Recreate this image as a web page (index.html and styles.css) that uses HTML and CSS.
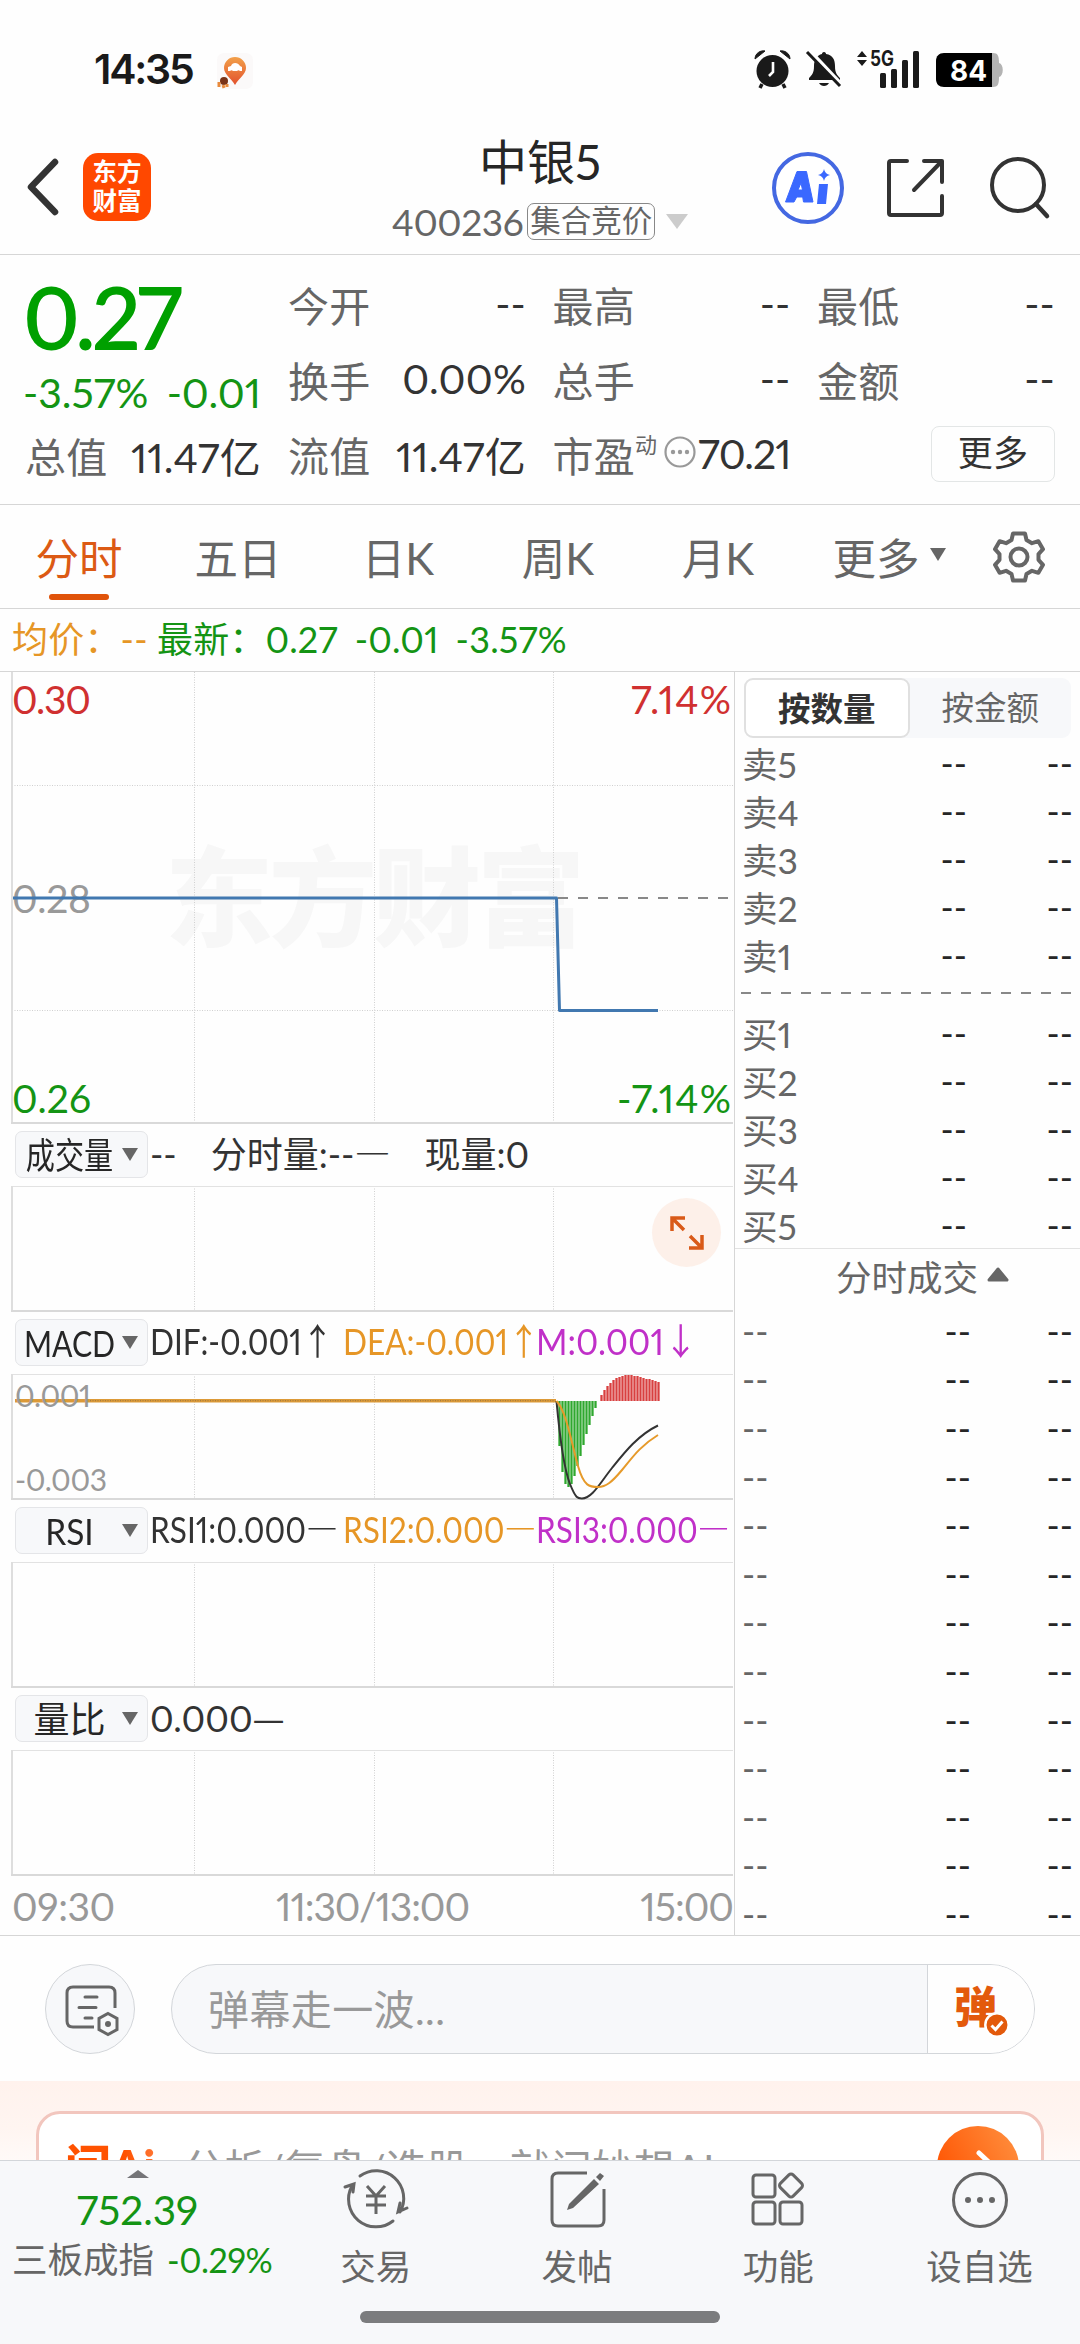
FILE: index.html
```html
<!DOCTYPE html>
<html lang="zh-CN">
<head>
<meta charset="utf-8">
<title>中银5 400236</title>
<link rel="stylesheet" href="styles.css">
</head>
<body>
<div class="phone">

  <div class="status">
    <span class="clock">14:35</span>
    <svg class="pin" width="36" height="36" viewBox="0 0 36 36">
      <defs><linearGradient id="pinFill" x1="0" y1="0" x2="0" y2="1"><stop offset="0" stop-color="#f2a04a"/><stop offset="1" stop-color="#e2512c"/></linearGradient></defs>
      <rect width="36" height="36" rx="7" fill="#fbf9f9"/>
      <path d="M18 32C14 25 7 21 7 15a11 11 0 0 1 22 0c0 6-7 10-11 17z" fill="url(#pinFill)"/>
      <path d="M11 18v-4l3-1c1-4 7-4 9 0l2 1v4h-2a2 2 0 0 0-3 0h-4a2 2 0 0 0-3 0z" fill="#fff"/>
      <circle cx="7" cy="28" r="4" fill="#7a3418"/><path d="M2 29v5M6 32l1 3M10 31v3" stroke="#e88a3c" stroke-width="3"/>
    </svg>
    <div class="status-right">
      <svg width="37" height="38" viewBox="0 0 37 38">
        <path d="M8 34l-2 4M29 34l2 4" stroke="#1a1a1a" stroke-width="3.5"/>
        <circle cx="18.5" cy="21" r="16" fill="#1a1a1a"/>
        <path d="M1 9C1 3 7 0 11 1zM36 9C36 3 30 0 26 1z" fill="#1a1a1a" stroke="#1a1a1a"/>
        <path d="M19 12v10l-4 4" fill="none" stroke="#fff" stroke-width="2.6"/>
      </svg>
      <svg class="bell" width="36" height="37" viewBox="0 0 36 37">
        <path d="M18 1c1.500 0 2 1 2 2 7 1 9 6 9 12 0 7 2 9 5 12v2H3v-2c3-3 5-5 5-12 0-6 3-11 8-12 0-1 .5-2 2-2z" fill="#1a1a1a"/>
        <path d="M13 32h10c-2 4-8 4-10 0z" fill="#1a1a1a"/>
        <path d="M4 0l32 34" stroke="#fff" stroke-width="4"/><path d="M1 1l33 34" stroke="#1a1a1a" stroke-width="3"/>
      </svg>
      <svg class="signal" width="64" height="38" viewBox="0 0 64 38">
        <path d="M1 7l5-6 5 6zM1 10h10l-5 6z" fill="#1a1a1a"/>
        <text x="14" y="16" class="fiveg" textLength="24" lengthAdjust="spacingAndGlyphs">5G</text>
        <rect x="24" y="23" width="6" height="15" rx="1.500"/><rect x="35" y="19" width="6" height="19" rx="1.500"/><rect x="46" y="10" width="6" height="28" rx="1.500"/><rect x="57" y="1" width="6" height="37" rx="1.500"/>
      </svg>
      <svg class="battery" width="67" height="36" viewBox="0 0 67 36">
        <path d="M54 1h3c5 0 6 3 6 10 5 1 5 13 0 14 0 7-1 10-6 10h-3z" fill="#b3b3b3"/>
        <path d="M8 1h48v34H8c-5 0-8-3-8-8V9c0-5 3-8 8-8z" fill="#000"/>
        <text x="14" y="29" class="pct" textLength="37" lengthAdjust="spacingAndGlyphs">84</text>
      </svg>
    </div>
  </div>

  <header class="header">
    <div class="head-left">
      <svg width="34" height="58" viewBox="0 0 34 58"><path d="M29 4L5 29l24 25" fill="none" stroke="#333" stroke-width="6.500" stroke-linecap="round" stroke-linejoin="round"/></svg>
      <div class="logo">东方<br>财富</div>
    </div>
    <div class="head-mid">
      <div class="title">中银5</div>
      <div class="sub"><span class="code">400236</span><span class="tag">集合竞价</span><svg width="22" height="15" viewBox="0 0 22 15"><path d="M0 0h22L11 15z" fill="#ccc"/></svg></div>
    </div>
    <div class="head-right">
      <svg width="72" height="72" viewBox="0 0 72 72">
        <circle cx="36" cy="36" r="34" fill="#fff" stroke="#4468e2" stroke-width="4"/>
        <path d="M25 19.500h9.500L41 50h-9.500l-.8-5h-6L22 50h-8.500zM29 31l-3 7h4.500z" fill="#3a68ff" stroke="#3a68ff" stroke-width="1" stroke-linejoin="round"/>
        <path d="M47 32h9l-2 20h-9z" fill="#3a68ff"/><path d="M52 17q1 5 6 6-5 1-6 6-1-5-6-6 5-1 6-6z" fill="#3a68ff"/>
      </svg>
      <svg class="share" width="60" height="60" viewBox="0 0 60 60"><path d="M21 3H5Q3 3 3 5v50q0 2 2 2h49q2 0 2-2V38M38 3h18v21M56 3L28 32" fill="none" stroke="#333" stroke-width="4" stroke-linecap="round" stroke-linejoin="round"/></svg>
      <svg class="search" width="60" height="62" viewBox="0 0 60 62"><circle cx="28" cy="28" r="26" fill="none" stroke="#333" stroke-width="4"/><path d="M46 47l11 12" stroke="#333" stroke-width="4.500" stroke-linecap="round"/></svg>
    </div>
  </header>

  <section class="quote">
    <div class="price">
      <div class="big">0.27</div>
      <div class="chg"><span>-3.57%</span><span>-0.01</span></div>
      <div class="kv"><span>总值</span><b>11.47亿</b></div>
    </div>
    <div class="cells">
      <div class="kv"><span>今开</span><b>--</b></div>
      <div class="kv"><span>最高</span><b>--</b></div>
      <div class="kv"><span>最低</span><b>--</b></div>
      <div class="kv"><span>换手</span><b>0.00%</b></div>
      <div class="kv"><span>总手</span><b>--</b></div>
      <div class="kv"><span>金额</span><b>--</b></div>
      <div class="kv"><span>流值</span><b>11.47亿</b></div>
      <div class="kv"><span>市盈<sup>动</sup></span>
        <svg width="32" height="32" viewBox="0 0 32 32"><circle cx="16" cy="16" r="14.500" fill="none" stroke="#999" stroke-width="2.200"/><g fill="#999"><circle cx="9" cy="16" r="2.200"/><circle cx="16" cy="16" r="2.200"/><circle cx="23" cy="16" r="2.200"/></g></svg>
        <b class="pe">70.21</b></div>
      <div class="kv end"><span class="more">更多</span></div>
    </div>
  </section>

  <nav class="tabs">
    <span class="tab on">分时</span><span class="tab">五日</span><span class="tab">日K</span><span class="tab">周K</span><span class="tab">月K</span>
    <span class="tab wide">更多<svg width="16" height="13" viewBox="0 0 16 13"><path d="M0 0h16L8 13z" fill="#666"/></svg></span>
    <svg class="gear" width="52" height="52" viewBox="0 0 52 52"><path d="M20 2.500h12l1.500 6.500 5.500 3.200 6.400-2 4.600 8-4.500 5v5.600l4.500 5-4.600 8-6.400-2-5.500 3.200L32 49.500H20L18.500 43 13 39.800l-6.400 2-4.600-8 4.500-5v-5.600l-4.500-5 4.600-8 6.400 2L18.500 9z" fill="none" stroke="#666" stroke-width="4" stroke-linejoin="round"/><circle cx="26" cy="26" r="8.500" fill="none" stroke="#666" stroke-width="4"/></svg>
  </nav>

  <div class="latest"><span class="avg">均价：<i>--</i></span><span class="now">最新：<i>0.27</i><i>-0.01</i><i>-3.57%</i></span></div>

  <main class="board">
    <div class="charts">
      <svg class="plot main-plot" width="734" height="452" viewBox="0 672 734 452">
        <text x="165" y="938" class="mark" textLength="420">东方财富</text>
        <g class="grid"><path d="M194.500 672v451M374.500 672v451M553.500 672v451M12 785.500h721M12 1010.500h721"/></g>
        <path class="frame-l" d="M12 672v451"/><path class="frame-b" d="M11 1123h722"/>
        <path class="dash" d="M558 898h175"/>
        <text x="12" y="913" class="axis grey" textLength="79">0.28</text>
        <path class="trend" d="M13 898h543.500l3 112.500H658"/>
        <text x="12" y="714" class="axis red" textLength="79">0.30</text>
        <text x="631" y="714" class="axis red" textLength="100">7.14%</text>
        <text x="12" y="1113" class="axis green" textLength="79">0.26</text>
        <text x="617" y="1113" class="axis green" textLength="114">-7.14%</text>
      </svg>

      <div class="ind"><span class="pick"><em class="narrow">成交量</em><svg width="16" height="13" viewBox="0 0 16 13"><path d="M0 0h16L8 13z" fill="#666"/></svg></span><span class="run"><i>--</i><i>分时量:--<u>—</u></i><i>现量:0</i></span></div>
      <div class="panel">
        <svg class="plot" width="734" height="126" viewBox="0 0 734 126"><g class="grid"><path d="M194.500 0v125M374.500 0v125M553.500 0v125"/></g><path class="frame-t" d="M11 .5h722"/><path class="frame-l" d="M12 0v125"/><path class="frame-b" d="M11 125h722"/></svg>
        <span class="expand"><svg width="34" height="34" viewBox="0 0 34 34"><path d="M2 15V2h13M2 2l12 12M32 19v13H19M32 32L20 20" fill="none" stroke="#d95a18" stroke-width="3.500"/></svg></span>
      </div>

      <div class="ind"><span class="pick"><em class="macd">MACD</em><svg width="16" height="13" viewBox="0 0 16 13"><path d="M0 0h16L8 13z" fill="#666"/></svg></span><span class="vals"><i>DIF:-0.001<u>↑</u></i><i class="gold">DEA:-0.001<u>↑</u></i><i class="pink m">M:0.001<u>↓</u></i></span></div>
      <svg class="plot" width="734" height="126" viewBox="0 1374 734 126">
        <g class="grid"><path d="M194.500 1374v125M374.500 1374v125M553.500 1374v125"/></g>
        <path class="frame-t" d="M11 1374.500h722"/><path class="frame-l" d="M12 1374v125"/><path class="frame-b" d="M11 1499h722"/>
        <path class="zero" d="M15 1400.700h541"/>
        <path class="dotted" d="M90 1400.700h464"/>
        <text x="15" y="1407" class="axis small grey" textLength="76">0.001</text>
        <text x="15" y="1491" class="axis small grey" textLength="92">-0.003</text>
        <g id="bars">
          <path class="dn" d="M559.500 1401v45M562.500 1401v71M565.500 1401v83M568.500 1401v86M571.500 1401v83M574.500 1401v75M577.500 1401v65M580.500 1401v55M583.500 1401v44M586.500 1401v33M589.500 1401v24M592.500 1401v15M595.500 1401v7"/>
          <path class="up" d="M601.500 1401v-6M604.500 1401v-11M607.500 1401v-15M610.500 1401v-18M613.500 1401v-21M616.500 1401v-23M619.500 1401v-24M622.500 1401v-25M625.500 1401v-26M628.500 1401v-26M631.500 1401v-26M634.500 1401v-25M637.500 1401v-25M640.500 1401v-24M643.500 1401v-23M646.500 1401v-22M649.500 1401v-22M652.500 1401v-21M655.500 1401v-20M658.500 1401v-19"/>
        </g>
        <path class="dif" d="M556.500 1401C560 1440 564 1469 570 1484S578 1498.500 582 1498.500C592 1498.500 600 1483 612 1468S638 1435 658 1425.500"/>
        <path class="dea" d="M556.500 1401C566 1410 572 1445 578 1466S590 1487 598 1487C606 1487 612 1482 622 1470S640 1446 658 1435"/>
      </svg>

      <div class="ind"><span class="pick"><em class="rsi">RSI</em><svg width="16" height="13" viewBox="0 0 16 13"><path d="M0 0h16L8 13z" fill="#666"/></svg></span><span class="vals"><i>RSI1:0.000<u>—</u></i><i class="gold">RSI2:0.000<u>—</u></i><i class="pink">RSI3:0.000<u>—</u></i></span></div>
      <svg class="plot" width="734" height="126" viewBox="0 0 734 126"><g class="grid"><path d="M194.500 0v125M374.500 0v125M553.500 0v125"/></g><path class="frame-t" d="M11 .5h722"/><path class="frame-l" d="M12 0v125"/><path class="frame-b" d="M11 125h722"/></svg>

      <div class="ind"><span class="pick"><em>量比</em><svg width="16" height="13" viewBox="0 0 16 13"><path d="M0 0h16L8 13z" fill="#666"/></svg></span><span class="run"><i>0.000<u>—</u></i></span></div>
      <svg class="plot" width="734" height="126" viewBox="0 0 734 126"><g class="grid"><path d="M194.500 0v125M374.500 0v125M553.500 0v125"/></g><path class="frame-t" d="M11 .5h722"/><path class="frame-l" d="M12 0v125"/><path class="frame-b" d="M11 125h722"/></svg>

      <div class="times"><span>09:30</span><span class="noon">11:30/13:00</span><span>15:00</span></div>
    </div>

    <aside class="book">
      <div class="seg"><span class="on">按数量</span><span>按金额</span></div>
      <div class="lvls">
        <div class="lvl"><span>卖5</span><b>--</b><b>--</b></div>
        <div class="lvl"><span>卖4</span><b>--</b><b>--</b></div>
        <div class="lvl"><span>卖3</span><b>--</b><b>--</b></div>
        <div class="lvl"><span>卖2</span><b>--</b><b>--</b></div>
        <div class="lvl"><span>卖1</span><b>--</b><b>--</b></div>
      </div>
      <svg class="split" width="332" height="2" viewBox="0 0 332 2"><path d="M0 1h332" stroke="#888" stroke-width="2" stroke-dasharray="10 10"/></svg>
      <div class="lvls">
        <div class="lvl"><span>买1</span><b>--</b><b>--</b></div>
        <div class="lvl"><span>买2</span><b>--</b><b>--</b></div>
        <div class="lvl"><span>买3</span><b>--</b><b>--</b></div>
        <div class="lvl"><span>买4</span><b>--</b><b>--</b></div>
        <div class="lvl"><span>买5</span><b>--</b><b>--</b></div>
      </div>
      <div class="deals-head">分时成交<svg width="22" height="15" viewBox="0 0 22 15"><path d="M11 2l9 11H2z" fill="#666" stroke="#666" stroke-width="3" stroke-linejoin="round"/></svg></div>
      <div class="deals">
        <div class="deal"><span>--</span><b>--</b><b>--</b></div>
        <div class="deal"><span>--</span><b>--</b><b>--</b></div>
        <div class="deal"><span>--</span><b>--</b><b>--</b></div>
        <div class="deal"><span>--</span><b>--</b><b>--</b></div>
        <div class="deal"><span>--</span><b>--</b><b>--</b></div>
        <div class="deal"><span>--</span><b>--</b><b>--</b></div>
        <div class="deal"><span>--</span><b>--</b><b>--</b></div>
        <div class="deal"><span>--</span><b>--</b><b>--</b></div>
        <div class="deal"><span>--</span><b>--</b><b>--</b></div>
        <div class="deal"><span>--</span><b>--</b><b>--</b></div>
        <div class="deal"><span>--</span><b>--</b><b>--</b></div>
        <div class="deal"><span>--</span><b>--</b><b>--</b></div>
        <div class="deal"><span>--</span><b>--</b><b>--</b></div>
      </div>
    </aside>
  </main>

  <div class="danmu">
    <span class="round"><svg width="56" height="54" viewBox="0 0 56 54"><path d="M30 43H9q-6 0-6-6V9q0-6 6-6h36q6 0 6 6v15" fill="none" stroke="#666" stroke-width="3"/><path d="M21 13h12M15 23.500h17M21 34h7" stroke="#666" stroke-width="3" stroke-linecap="round"/><path d="M44 29.500l9 5v11l-9 5-9-5v-11z" fill="#f7f8fa" stroke="#666" stroke-width="3"/><circle cx="44" cy="40" r="3" fill="#666"/></svg></span>
    <div class="field"><span class="hint">弹幕走一波...</span><span class="send">弹<svg width="26" height="26" viewBox="0 0 26 26"><circle cx="13" cy="13" r="11.700" fill="#e35a0c" stroke="#fff" stroke-width="2.500"/><path d="M7.500 13.500l4 4 7-8" fill="none" stroke="#fff" stroke-width="3"/></svg></span></div>
  </div>

  <div class="promo">
    <div class="card">
      <span class="ask">问Ai</span><span class="ptext">分析/复盘/选股，就问妙想AI</span>
      <svg width="82" height="82" viewBox="0 0 82 82"><defs><linearGradient id="go" x1="0" y1=".7" x2="1" y2=".2"><stop offset="0" stop-color="#ff5200"/><stop offset="1" stop-color="#ff8d3c"/></linearGradient></defs><circle cx="41" cy="41" r="41" fill="url(#go)"/><path d="M42 27l16 15-16 15M58 42H22" fill="none" stroke="#fff" stroke-width="5" stroke-linecap="round"/></svg>
    </div>
  </div>

  <footer class="dock">
    <div class="index">
      <svg width="22" height="8" viewBox="0 0 22 8"><path d="M0 8L11 0l11 8z" fill="#757578"/></svg>
      <span class="idx">752.39</span>
      <span class="idx-name">三板成指<i>-0.29%</i></span>
    </div>
    <div class="item"><svg width="66" height="60" viewBox="0 0 66 60" fill="none" stroke="#666" stroke-width="3" stroke-linecap="round"><path d="M17 7a27.500 27.500 0 0 1 40 36M50 52A27.500 27.500 0 0 1 9 17M2 18l9-3-1 8M64 39l-9 4 2-9"/><path d="M24 17l9 10 9-10M33 27v18M23 27h20M23 36h20" stroke-linecap="butt"/></svg><span>交易</span></div>
    <div class="item"><svg width="56" height="60" viewBox="0 0 56 60" fill="none" stroke="#666" stroke-width="3"><path d="M38 4H9Q3 4 3 10v41q0 6 6 6h40q6 0 6-6V20"/><path d="M45 10l5 5-26 24-6 2 2-6zM47 8l4-4 4 3-4 5z" fill="#666" stroke="none"/></svg><span>发帖</span></div>
    <div class="item"><svg width="56" height="60" viewBox="0 0 56 60" fill="none" stroke="#666" stroke-width="3"><rect x="3" y="6" width="22" height="22" rx="3"/><rect x="3" y="33" width="22" height="22" rx="3"/><rect x="30" y="33" width="22" height="22" rx="3"/><rect x="32" y="7.500" width="18" height="18" rx="3" transform="rotate(45 41 16.500)"/></svg><span>功能</span></div>
    <div class="item"><svg width="58" height="60" viewBox="0 0 58 60" fill="none" stroke="#666" stroke-width="3"><circle cx="29" cy="31" r="26.500"/><g fill="#666" stroke="none"><circle cx="17" cy="31" r="3"/><circle cx="29" cy="31" r="3"/><circle cx="41" cy="31" r="3"/></g></svg><span>设自选</span></div>
    <div class="homebar"></div>
  </footer>
</div>
</body>
</html>
```
FILE: styles.css
```css
* { box-sizing: border-box; }
body { margin: 0; background: #fefefe; font-family: Lato, "Noto Sans CJK SC", sans-serif; font-variant-numeric: proportional-nums; color: #333; }
i, em, u, b { font-style: normal; font-weight: 400; text-decoration: none; }
svg { display: block; flex: none; overflow: visible; }
.phone { width: 1080px; height: 2344px; overflow: hidden; display: flex; flex-direction: column; }
.phone > * { flex: none; }

/* status bar */
.status { height: 120px; display: flex; align-items: flex-start; padding: 50px 77px 0 94px; }
.clock { font: 600 41px/38px Inter, sans-serif; letter-spacing: -2.200px; width: 123px; color: #1a1a1a; }
.pin { margin-top: 3px; }
.status-right { margin-left: auto; display: flex; align-items: flex-start; }
.bell { margin: 1px 0 0 15px; }
.signal { margin-left: 14px; fill: #1a1a1a; }
.battery { margin: 2px 0 0 16px; }
.fiveg { font: 700 21px Inter, sans-serif; }
.pct { font: 700 29px Inter, sans-serif; fill: #fff; }

/* header */
.header { height: 135px; border-bottom: 1px solid #d6d6d6; display: grid; grid-template-columns: 1fr auto 1fr; }
.head-left { display: flex; align-items: flex-start; padding: 33px 0 0 26px; gap: 23px; }
.head-left svg { margin-top: 5px; }
.logo { width: 68px; height: 68px; border-radius: 15px; background: #ff4800; color: #fff; font-size: 24.500px; font-weight: 700; line-height: 29px; text-align: center; padding-top: 4px; }
.head-mid { display: flex; flex-direction: column; align-items: center; }
.title { font-size: 48px; line-height: 50px; margin-top: 17px; color: #262626; }
.sub { display: flex; align-items: center; margin-top: 14px; height: 40px; color: #666; }
.code { font-size: 37px; letter-spacing: -.4px; }
.tag { font-size: 30.500px; line-height: 33px; height: 37px; border: 1.500px solid #888; border-radius: 7px; padding: 0 2px; margin: 0 11px 0 4px; }
.head-right { display: flex; align-items: flex-start; justify-content: flex-end; padding: 32px 30px 0 0; }
.share { margin: 6px 0 0 42px; }
.search { margin: 5px 0 0 44px; }

/* quote summary */
.quote { height: 250px; border-bottom: 1px solid #d6d6d6; display: flex; padding: 12px 25px 0 25px; gap: 27px; }
.price { width: 237px; color: #00a000; display: flex; flex-direction: column; }
.big { font-size: 86px; font-weight: 600; line-height: 90px; height: 98px; letter-spacing: -4px; padding-top: 5px; margin-left: -2px; }
.chg { display: flex; justify-content: space-between; font-size: 41px; line-height: 56px; height: 52px; color: #149414; margin-left: -2px; }
.cells { flex: 1; display: grid; grid-template-columns: repeat(3, 238px); grid-auto-rows: 75px; column-gap: 26.500px; }
.kv { display: flex; justify-content: space-between; align-items: center; height: 75px; font-size: 41px; color: #666; white-space: nowrap; letter-spacing: .2px; }
.price .kv { margin-top: 0; }
.cells .kv { margin-top: -1px; }
.kv b { color: #333; }
.kv sup { font-size: 22px; line-height: 0; vertical-align: 19px; }
.kv svg { margin: -3px -4px 0 0; }
.kv .pe { letter-spacing: -1px; }
.kv.end { justify-content: flex-end; }
.more { width: 124px; height: 56px; border: 1.500px solid #e3e6e6; border-radius: 8px; font-size: 35px; line-height: 50px; text-align: center; color: #333; }

/* period tabs */
.tabs { height: 104px; border-bottom: 1px solid #d6d6d6; display: flex; }
.tab { width: 160px; height: 103px; display: flex; justify-content: center; align-items: center; font-size: 43.500px; color: #666; position: relative; }
.tab.on { width: 158px; color: #dc5a14; }
.tab.on::after { content: ""; position: absolute; left: 49px; bottom: 8px; width: 60px; height: 6px; border-radius: 3px; background: #e0530a; }
.tab.wide { width: 180px; gap: 10px; margin-left: 1px; }
.tab.wide svg { margin-top: -4px; }
.gear { margin: 26px 0 0 14px; }

.latest { height: 63px; border-bottom: 1px solid #d6d6d6; display: flex; align-items: baseline; padding: 4px 0 0 12px; font-size: 36px; line-height: 52px; letter-spacing: .2px; }
.avg { color: #e69626; width: 145px; display: flex; align-items: baseline; }
.now { color: #149414; display: flex; align-items: baseline; gap: 17px; }
.now i:first-of-type { margin-left: -17px; }

/* chart board */
.board { height: 1264px; display: flex; border-bottom: 1px solid #d6d6d6; }
.charts { width: 735px; border-right: 1px solid #d6d6d6; }
.grid { fill: none; stroke: #d0d0d0; stroke-dasharray: 1 1.500; }
.frame-l { stroke: #dedede; stroke-width: 2; }
.frame-b { stroke: #d9d9d9; stroke-width: 2; }
.frame-t { stroke: #e2e2e2; }
.dash { stroke: #888; stroke-width: 2; stroke-dasharray: 10 10; }
.trend { fill: none; stroke: #4178b0; stroke-width: 3; stroke-linejoin: round; }
.mark { font: 900 108px "Noto Sans CJK SC", sans-serif; fill: #f7f7f7; }
.axis { font-size: 39px; }
.axis.small { font-size: 30px; }
.red { fill: #d03030; } .green { fill: #149414; } .grey { fill: #999; }
.zero { stroke: #dc9a38; stroke-width: 3.500; }
.dotted { stroke: #9a7440; stroke-width: 1; stroke-dasharray: 1 1.500; }
.dn { stroke: #2fa82f; stroke-width: 2.300; }
.up { stroke: #d84040; stroke-width: 2.300; }
.dif { fill: none; stroke: #333; stroke-width: 2; }
.dea { fill: none; stroke: #e69a2a; stroke-width: 2; }

.ind { height: 62px; display: flex; align-items: center; padding: 0 0 1px 15px; white-space: nowrap; }
.pick { width: 133px; height: 47px; border: 1px solid #e4e5e8; border-radius: 7px; background: #f7f8fa; display: flex; align-items: center; justify-content: space-between; padding: 0 9px 0 10px; font-size: 36px; }
.pick em { width: 87px; display: flex; justify-content: center; line-height: 42px; color: #262626; }
.narrow { transform: scaleX(.81); }
.macd { transform: scaleX(.84); }
.rsi { transform: scaleX(.93); }
.run { display: flex; align-items: baseline; margin: -4px 0 0 2px; gap: 34px; font-size: 36px; line-height: 46px; }
.vals { margin: -4px 0 0 2px; display: grid; grid-template-columns: 193px 193px 193px; font-size: 36.500px; line-height: 46px; }
.vals i { width: max-content; transform: scaleX(.865); transform-origin: left center; }
.vals i.m { transform: scaleX(.93); }
.ind u { font-family: "Noto Sans CJK SC", sans-serif; }
.gold { color: #e69626; } .pink { color: #c030c8; }
.panel { position: relative; }
.expand { position: absolute; left: 652px; top: 12px; width: 69px; height: 69px; border-radius: 50%; background: #fdf0e9; display: flex; align-items: center; justify-content: center; }
.times { display: grid; grid-template-columns: 1fr auto 1fr; padding: 6px 1px 0 12px; font-size: 39px; line-height: 48px; color: #999; letter-spacing: -.4px; }
.times .noon { letter-spacing: -1.100px; }
.times span:last-child { text-align: right; letter-spacing: -1px; }

/* order book */
.book { width: 345px; }
.seg { margin: 6px 9px -1px; height: 60px; display: flex; background: #f7f8fa; border-radius: 9px; font-size: 32.500px; color: #666; }
.seg span { flex: 1; text-align: center; line-height: 60px; }
.seg .on { background: #fff; border: 2px solid #e0e0e0; border-radius: 9px; font-weight: 700; color: #333; line-height: 57px; }
.lvl, .deal { height: 48px; display: grid; grid-template-columns: 1fr 106px 106px; align-items: center; padding: 0 7px 0 7px; font-size: 35.500px; color: #666; }
.lvl b, .deal b { text-align: right; color: #262626; }
.split { margin: 15px 0 13px 6px; }
.deals-head { height: 58px; margin-top: 1px; padding-bottom: 5px; border-top: 1px solid #e2e2e2; display: flex; align-items: center; gap: 9px; padding-left: 101px; font-size: 35.500px; color: #666; }
.deals-head svg { margin-top: -2px; }
.deal { height: 48.600px; grid-template-columns: 1fr 106px 102px; }

/* comment bar */
.danmu { height: 145px; padding: 28px 45px 0 45px; display: flex; gap: 36px; }
.round { width: 90px; height: 90px; border-radius: 50%; border: 1.500px solid #d3d6da; background: #f7f8fa; display: flex; align-items: center; justify-content: center; padding: 4px 0 0 4px; }
.field { flex: 1; height: 90px; border: 1.500px solid #d3d6da; border-radius: 45px; background: #f7f8fa; display: flex; overflow: hidden; }
.hint { flex: 1; padding-left: 36px; font-size: 41px; line-height: 90px; letter-spacing: .4px; color: #999; }
.send { width: 107px; border-left: 1.500px solid #d3d6da; background: #fefefe; position: relative; font-size: 43px; font-weight: 900; line-height: 84px; padding-left: 26px; color: #e35a0c; }
.send svg { position: absolute; left: 56px; top: 47px; }

/* promo card, cut off by the dock */
.promo { height: 79px; overflow: hidden; background: linear-gradient(#fff2ed, #fff5f1 60%, #fffaf8); padding: 30px 36px 0; }
.card { height: 116px; border: 3px solid #f2c6be; border-radius: 24px; background: #fff; display: flex; align-items: flex-start; padding: 12px 22px 0 26px; }
.ask { width: 118px; font-size: 46px; font-weight: 900; line-height: 60px; margin-top: 10px; white-space: nowrap; background: linear-gradient(90deg, #ff5200 50%, #ff9460); -webkit-background-clip: text; background-clip: text; color: transparent; }
.ptext { flex: 1; font-size: 41px; line-height: 60px; margin-top: 13px; letter-spacing: .3px; color: #999; }

/* bottom dock */
.dock { height: 184px; background: #f7f8fa; border-top: 1px solid #d3d6da; display: grid; grid-template-columns: 275px repeat(4, 201.300px); grid-template-rows: 150px 12px; color: #666; }
.index { display: flex; flex-direction: column; align-items: center; padding-top: 9px; }
.idx { font-size: 40.500px; line-height: 50px; margin-top: 7px; color: #149414; }
.idx-name { align-self: flex-start; margin: 1px 0 0 12px; font-size: 35.500px; line-height: 48px; display: flex; align-items: baseline; white-space: nowrap; }
.idx-name i { font-size: 34px; margin-left: 13px; color: #149414; letter-spacing: -.4px; }
.item { display: flex; flex-direction: column; align-items: center; padding-top: 8px; font-size: 35.500px; line-height: 50px; }
.item span { margin-top: 13px; }
.homebar { grid-column: 1 / -1; width: 360px; height: 12px; margin-left: 360px; border-radius: 6px; background: #7b7c7e; }
```
